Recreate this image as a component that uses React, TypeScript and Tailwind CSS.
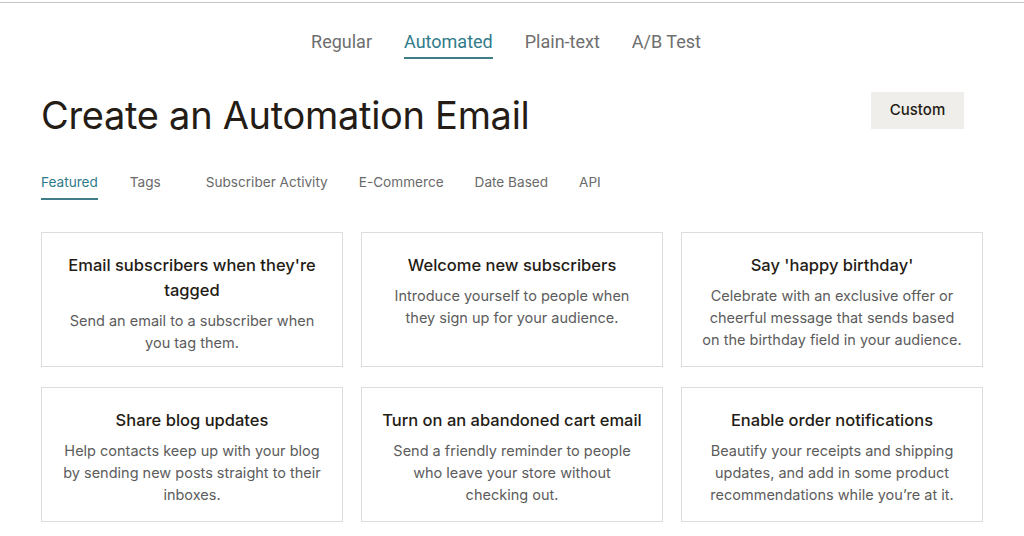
const topTabs = ["Regular", "Automated", "Plain-text", "A/B Test"];

const subTabs = [
  { label: "Featured", cls: "mr-8" },
  { label: "Tags", cls: "mr-[45px]" },
  { label: "Subscriber Activity", cls: "mr-[31px]" },
  { label: "E-Commerce", cls: "mr-[31px]" },
  { label: "Date Based", cls: "mr-[31px]" },
  { label: "API", cls: "" },
];

const cards = [
  {
    title: "Email subscribers when they're tagged",
    text: "Send an email to a subscriber when you tag them.",
  },
  {
    title: "Welcome new subscribers",
    text: "Introduce yourself to people when they sign up for your audience.",
  },
  {
    title: "Say 'happy birthday'",
    text: "Celebrate with an exclusive offer or cheerful message that sends based on the birthday field in your audience.",
  },
  {
    title: "Share blog updates",
    text: "Help contacts keep up with your blog by sending new posts straight to their inboxes.",
  },
  {
    title: "Turn on an abandoned cart email",
    text: "Send a friendly reminder to people who leave your store without checking out.",
  },
  {
    title: "Enable order notifications",
    text: "Beautify your receipts and shipping updates, and add in some product recommendations while you\u2019re at it.",
  },
];

export default function App() {
  return (
    <div className="min-h-[536px] bg-white font-['Inter',sans-serif] text-[#241c15]">
      <div className="h-[3px] border-b border-[#c4c4c4]" />

      <nav className="flex justify-center gap-8 pr-[12px] pt-[25px] font-['Roboto',sans-serif] text-[18px]">
        {topTabs.map((t) => (
          <div
            key={t}
            className={
              t === "Automated"
                ? "border-b-2 border-[#3f7d89] pb-[2px] text-[#2f7b8a]"
                : "pb-[2px] text-[#6e6e6e]"
            }
          >
            {t}
          </div>
        ))}
      </nav>

      <div className="px-[41px]">
        <div className="mt-[32px] flex items-start justify-between">
          <h1 className="text-[38px] leading-[48px] tracking-[-0.3px]">Create an Automation Email</h1>
          <button className="mr-[19px] mt-[1px] h-[37px] w-[93px] bg-[#efeeea] text-[15px] font-medium text-[#241c15]">
            Custom
          </button>
        </div>

        <div className="mt-[33px] flex text-[13.6px] text-[#6a6a6a]">
          {subTabs.map((t) => (
            <div
              key={t.label}
              className={
                t.label === "Featured"
                  ? `${t.cls} border-b-2 border-[#3f7d89] pb-[6px] text-[#2f7b8a]`
                  : `${t.cls} pb-[6px]`
              }
            >
              {t.label}
            </div>
          ))}
        </div>

        <div className="mt-[32px] grid w-[942px] grid-cols-3 gap-x-[18px] gap-y-[20px]">
          {cards.map((c) => (
            <div
              key={c.title}
              className="flex h-[135px] flex-col items-center border border-[#dedddc] px-[18px] pt-[20px] text-center"
            >
              <h3 className="text-[16.5px] font-medium leading-[25px] text-[#241c15]">{c.title}</h3>
              <p className="mt-[7px] text-[14.5px] leading-[22px] text-[#5c5c5c]">{c.text}</p>
            </div>
          ))}
        </div>
      </div>
    </div>
  );
}
